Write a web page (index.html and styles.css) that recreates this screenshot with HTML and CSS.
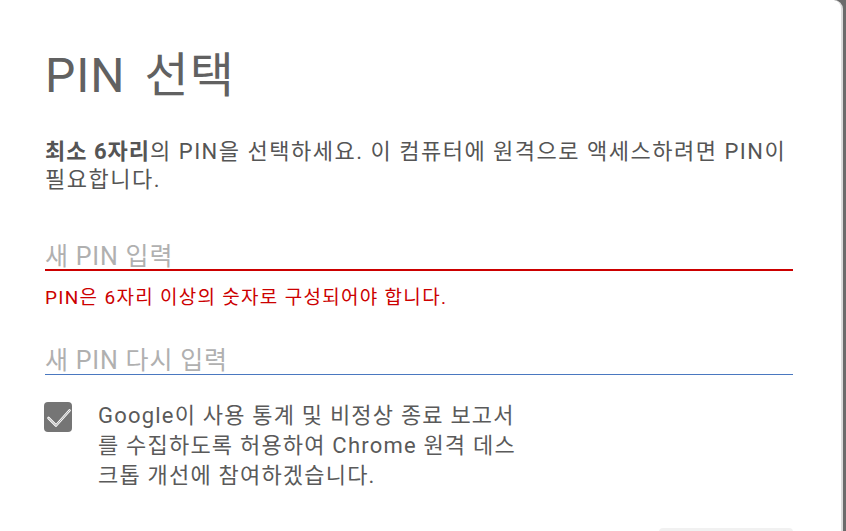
FILE: index.html
```html
<!DOCTYPE html>
<html lang="ko">
<head>
  <meta charset="UTF-8" />
  <title>PIN 선택</title>
  <link rel="stylesheet" href="styles.css">
</head>
<body>

  <div class="dialog">
    <h1 class="title">PIN 선택</h1>

    <p class="intro">
      <strong>최소 6자리</strong>의 PIN을 선택하세요. 이 컴퓨터에 원격으로 액세스하려면 PIN이 필요합니다.
    </p>

    <div class="field invalid">
      <input type="password" placeholder="새 PIN 입력">
    </div>
    <div class="error">PIN은 6자리 이상의 숫자로 구성되어야 합니다.</div>

    <div class="field">
      <input type="password" placeholder="새 PIN 다시 입력">
    </div>

    <label class="consent">
      <span class="box">
        <svg width="28" height="30" viewBox="0 0 28 30">
          <path d="M4.5 16 L12 23.5 L25.5 8.5" fill="none" stroke="#fff" stroke-width="2.6" stroke-linecap="round" stroke-linejoin="round"/>
          <path d="M4.5 16 L12 23.5 L25.5 8.5" fill="none" stroke="#8a8a8a" stroke-width="0.8" stroke-linecap="round" stroke-linejoin="round"/>
        </svg>
      </span>
      <span class="consent-text">Google이 사용 통계 및 비정상 종료 보고서를 수집하도록 허용하여 Chrome 원격 데스크톱 개선에 참여하겠습니다.</span>
    </label>

    <div class="actions">
      <button class="btn"></button>
    </div>
  </div>

</body>
</html>
```

FILE: styles.css
```css
* {
  box-sizing: border-box;
  margin: 0;
  padding: 0;
}

body {
  background: #6b6b6b;
  font-family: Roboto, "Noto Sans CJK KR", sans-serif;
  height: 531px;
  overflow: hidden;
}

.dialog {
  width: 843px;
  height: 600px;
  background: #fff;
  border-top-right-radius: 9px;
  border-right: 2px solid #dcdcdc;
  padding: 0 48px 0 45px;
}

.title {
  font-size: 48px;
  font-weight: 400;
  color: #616161;
  line-height: 56px;
  padding-top: 48px;
  letter-spacing: 1px;
  word-spacing: 6px;
}

.intro {
  margin-top: 34px;
  font-size: 22px;
  line-height: 28px;
  letter-spacing: 1.5px;
  color: #555;
}

.intro strong {
  font-weight: 700;
  letter-spacing: 1px;
}

.field {
  margin-top: 30px;
  border-bottom: 1px solid #4a78c0;
}

.field.invalid {
  margin-top: 41px;
  border-bottom: 2px solid #cc0000;
}

.field input {
  width: 100%;
  border: none;
  outline: none;
  background: transparent;
  font-family: inherit;
  font-size: 25px;
  letter-spacing: 0.8px;
  height: 34px;
  padding-top: 7px;
  color: #333;
}

.field.invalid input {
  padding-top: 9px;
}

.field input::placeholder {
  color: #b0b0b0;
}

.error {
  margin-top: 15px;
  font-size: 19px;
  line-height: 24px;
  letter-spacing: 1.3px;
  color: #cc0000;
}

.consent {
  display: flex;
  align-items: flex-start;
  gap: 26px;
  margin-top: 26px;
  margin-left: -1px;
}

.box {
  flex: none;
  width: 28px;
  height: 30px;
  margin-top: 1px;
  border-radius: 4px;
  background: #757575;
  display: flex;
}

.consent-text {
  width: 432px;
  font-size: 22px;
  line-height: 30px;
  letter-spacing: 1.2px;
  color: #5a5a5a;
}

.actions {
  display: flex;
  justify-content: flex-end;
  margin-top: 37px;
}

.btn {
  width: 134px;
  height: 36px;
  border: none;
  border-radius: 4px;
  background: #f1f1f1;
}
```
